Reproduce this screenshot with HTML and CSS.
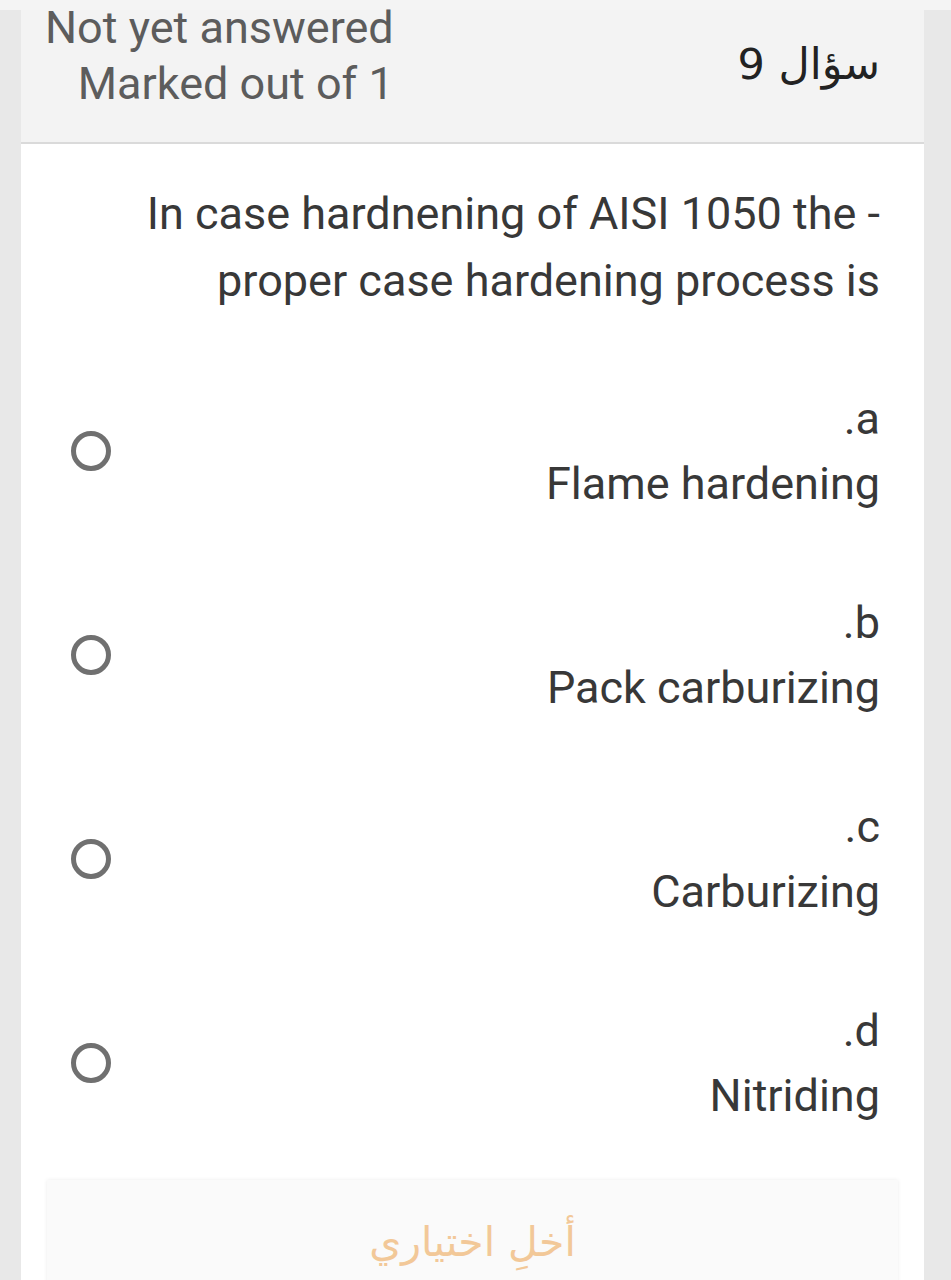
FILE: index.html
```html
<!DOCTYPE html>
<html lang="ar" dir="rtl">
<head>
<meta charset="utf-8">
<link rel="stylesheet" href="styles.css">
</head>
<body>
<div class="page">
  <div class="card">
    <div class="head">
      <div class="qno">سؤال <span class="num">9</span></div>
      <div class="info" dir="ltr">
        <div class="state">Not yet answered</div>
        <div class="grade">Marked out of 1</div>
      </div>
    </div>
    <div class="content">
      <div class="qtext"><span dir="ltr">In case hardnening of AISI 1050 the -</span><br><span dir="ltr">proper case hardening process is</span></div>
      <div class="answers">
        <label class="opt">
          <div class="lbl"><span class="letter">a.</span><span class="txt" dir="ltr">Flame hardening</span></div>
          <span class="radio"></span>
        </label>
        <label class="opt">
          <div class="lbl"><span class="letter">b.</span><span class="txt" dir="ltr">Pack carburizing</span></div>
          <span class="radio"></span>
        </label>
        <label class="opt">
          <div class="lbl"><span class="letter">c.</span><span class="txt" dir="ltr">Carburizing</span></div>
          <span class="radio"></span>
        </label>
        <label class="opt">
          <div class="lbl"><span class="letter">d.</span><span class="txt" dir="ltr">Nitriding</span></div>
          <span class="radio"></span>
        </label>
      </div>
      <div class="clear"><span class="clear-txt">أخلِ اختياري</span></div>
    </div>
  </div>
</div>
</body>
</html>
```
FILE: styles.css
```css
html, body {
  margin: 0;
  padding: 0;
}
body {
  background: #e8e8e8;
  font-family: Roboto, "Liberation Sans", sans-serif;
  height: 1280px;
  overflow: hidden;
}
.page {
  border-top: 10px solid #f4f4f4;
  padding: 0 27px 0 21px;
}
.card {
  background: #ffffff;
  height: 1300px;
}
.head {
  background: #f3f3f3;
  border-bottom: 2px solid #dadada;
  height: 132px;
  display: flex;
  justify-content: space-between;
  align-items: flex-start;
  padding: 0 44px 0 24px;
}
.qno {
  font-family: "DejaVu Sans", sans-serif;
  font-size: 43px;
  color: #222;
  margin-top: 32px;
  line-height: 44px;
}
.info {
  text-align: right;
  color: #5c5c5c;
  font-size: 45px;
  line-height: 56px;
  margin-top: -10px;
}
.content {
  padding: 36px 44px 0 48px;
}
.qtext {
  color: #383838;
  font-size: 45px;
  line-height: 67px;
  text-align: right;
}
.answers {
  margin-top: 72px;
  display: flex;
  flex-direction: column;
  gap: 74px;
}
.opt {
  display: flex;
  align-items: center;
  justify-content: space-between;
}
.lbl {
  display: flex;
  flex-direction: column;
  align-items: flex-start;
  color: #383838;
  font-size: 45px;
  line-height: 65px;
}
.radio {
  width: 30px;
  height: 30px;
  border: 5px solid #707070;
  border-radius: 50%;
  margin-left: 2px;
  flex: none;
}
.clear {
  margin: 52px -18px 0 -22px;
  background: #fafafa;
  box-shadow: 0 0 4px rgba(0, 0, 0, 0.08);
  height: 130px;
  display: flex;
  justify-content: center;
  padding-top: 36px;
  box-sizing: border-box;
}
.clear-txt {
  font-family: "DejaVu Sans", sans-serif;
  font-size: 41px;
  line-height: 52px;
  color: #f2c898;
}
```
